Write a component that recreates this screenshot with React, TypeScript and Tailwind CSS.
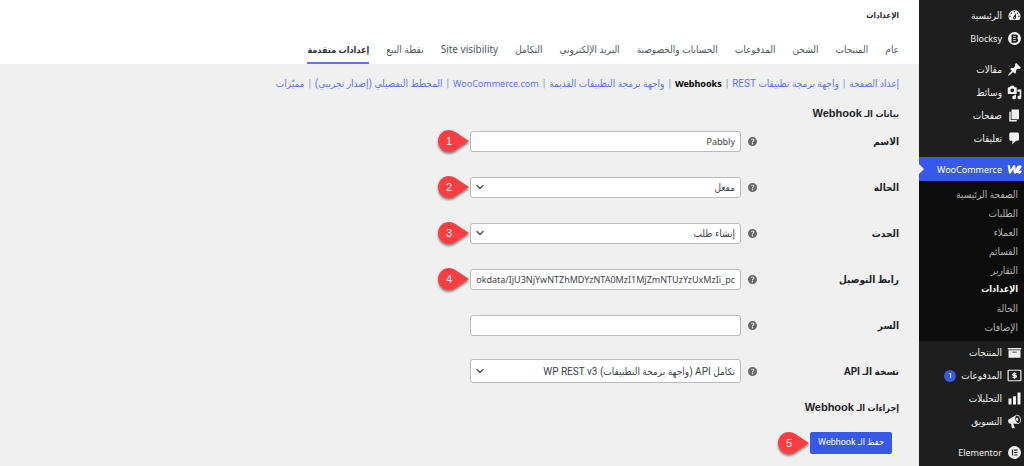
import { useState, type ReactNode } from 'react';
import { ChevronDown } from 'lucide-react';
import { clsx } from 'clsx';

function Dashicon({ d }: { d: string }) {
  return (
    <svg viewBox="0 0 20 20" className="size-[15px] shrink-0 fill-current" aria-hidden="true">
      <path d={d} />
    </svg>
  );
}

const icons: Record<string, ReactNode> = {
  dashboard: (
    <Dashicon d="M3.76 16h12.48A7.998 7.998 0 0 0 10 3a7.998 7.998 0 0 0-6.24 13zM10 4c.55 0 1 .45 1 1s-.45 1-1 1-1-.45-1-1 .45-1 1-1zM6 6c.55 0 1 .45 1 1s-.45 1-1 1-1-.45-1-1 .45-1 1-1zm8 0c.55 0 1 .45 1 1s-.45 1-1 1-1-.45-1-1 .45-1 1-1zm-5.37 5.55L12 7v6c0 1.1-.9 2-2 2s-2-.9-2-2c0-.57.24-1.08.63-1.45zM4 10c.55 0 1 .45 1 1s-.45 1-1 1-1-.45-1-1 .45-1 1-1zm12 0c.55 0 1 .45 1 1s-.45 1-1 1-1-.45-1-1 .45-1 1-1zm-5 3c0-.55-.45-1-1-1s-1 .45-1 1 .45 1 1 1 1-.45 1-1z" />
  ),
  blocksy: (
    <svg viewBox="0 0 20 20" className="size-[15px] shrink-0" aria-hidden="true">
      <circle cx="10" cy="10" r="8.6" fill="currentColor" />
      <path d="M6 4.5h5.5c2 0 3 1.2 3 2.8 0 1-.4 1.8-1 2.3.8.5 1.3 1.4 1.3 2.5 0 2-1.3 3.4-3.3 3.4H6z" fill="#1e1e1e" />
      <path d="M8.3 7.4h3.5M8.3 10h3.5M8.3 12.7h3.5" stroke="currentColor" strokeWidth="1.1" />
    </svg>
  ),
  post: (
    <Dashicon d="M10.44 3.02l1.82-1.82 6.36 6.35-1.83 1.82c-1.05-.68-2.48-.57-3.41.36l-.75.75c-.92.93-1.04 2.35-.35 3.41l-1.83 1.82-2.41-2.41-2.8 2.79c-.42.42-3.38 2.71-3.8 2.29s1.86-3.39 2.28-3.81l2.79-2.79L4.1 9.36l1.83-1.82c1.05.69 2.48.57 3.4-.36l.75-.75c.93-.92 1.05-2.35.36-3.41z" />
  ),
  media: (
    <Dashicon d="M13 11V4c0-.55-.45-1-1-1h-1.67L9 1H5L3.67 3H2c-.55 0-1 .45-1 1v7c0 .55.45 1 1 1h10c.55 0 1-.45 1-1zM7 4.5c1.38 0 2.5 1.12 2.5 2.5S8.38 9.5 7 9.5 4.5 8.38 4.5 7 5.62 4.5 7 4.5zM14 6h5v10.5c0 1.38-1.12 2.5-2.5 2.5S14 17.88 14 16.5s1.12-2.5 2.5-2.5c.17 0 .34.02.5.05V9h-3V6zm-4 8.05V13h2v3.5c0 1.38-1.12 2.5-2.5 2.5S7 17.88 7 16.5 8.12 14 9.5 14c.17 0 .34.02.5.05z" />
  ),
  page: <Dashicon d="M6 15V2h10v13H6zm-1 1h8v2H3V5h2v11z" />,
  comments: <Dashicon d="M5 2h9c1.1 0 2 .9 2 2v7c0 1.1-.9 2-2 2h-2l-5 5v-5H5c-1.1 0-2-.9-2-2V4c0-1.1.9-2 2-2z" />,
  woo: (
    <svg viewBox="0 0 20 20" className="size-[15px] shrink-0" fill="none" stroke="currentColor" strokeWidth="3" strokeLinejoin="round" strokeLinecap="round" aria-hidden="true">
      <path d="M2.5 5.5L4 14l5.5-8.5 1 8.5c3-1.5 6-4.5 7.5-8-4.5-.5-6 5.5-3 7.5 1.2.7 2.5.3 3-.5" />
    </svg>
  ),
  archive: <Dashicon d="M19 4v2H1V4h18zM2 7h16v10H2V7zm11 3V9H7v1h6z" />,
  payments: (
    <svg viewBox="0 0 20 20" className="size-[15px] shrink-0" fill="none" stroke="currentColor" aria-hidden="true">
      <rect x="1.5" y="3" width="17" height="14" rx="1" strokeWidth="1.6" />
      <path d="M12.5 7.5H9c-2 0-2 2.5 0 2.5h2c2 0 2 2.5 0 2.5H7.5M10 5.5v9" strokeWidth="1.7" />
    </svg>
  ),
  chart: <Dashicon d="M18 18V2h-4v16h4zm-6 0V7H8v11h4zm-6 0v-8H2v8h4z" />,
  megaphone: (
    <Dashicon d="M18.15 5.94c.46 1.62.38 3.22-.02 4.48-.42 1.28-1.26 2.18-2.3 2.48-.16.06-.26.06-.4.06-.06.02-.12.02-.18.02-.06.02-.14.02-.22.02h-6.8l2.22 5.5c.02.14-.06.26-.14.34-.08.1-.24.16-.34.16H6.95c-.1 0-.26-.06-.34-.16-.08-.08-.16-.2-.14-.34l-1-5.5H4.25l-.02-.02c-.5.06-1.08-.18-1.54-.62s-.88-1.08-1.06-1.88c-.24-.8-.2-1.56-.02-2.2.18-.62.58-1.08 1.06-1.3l.02-.02 9-5.4c.1-.06.18-.1.24-.16.06-.04.14-.08.24-.12.16-.08.28-.12.5-.18 1.04-.3 2.24.1 3.22.98s1.84 2.24 2.26 3.86zm-2.58 5.98h-.02c.4-.1.74-.34 1.04-.7.58-.7.86-1.76.86-3.04 0-.64-.1-1.3-.28-1.98-.34-1.36-1.02-2.5-1.78-3.24s-1.68-1.1-2.46-.88c-.82.22-1.4.96-1.7 2-.32 1.04-.28 2.36.06 3.72.38 1.36 1 2.5 1.8 3.24.78.74 1.62 1.1 2.48.88zm-2.54-7.08c.22-.04.42-.02.62.04.38.16.76.48 1.02 1s.42 1.2.42 1.78c0 .3-.04.56-.12.8-.18.48-.44.84-.86.94-.34.1-.8-.06-1.14-.4s-.64-.86-.78-1.5c-.18-.62-.12-1.24.02-1.72s.48-.84.82-.94z" />
  ),
  elementor: (
    <svg viewBox="0 0 20 20" className="size-[15px] shrink-0" aria-hidden="true">
      <circle cx="10" cy="10" r="8.6" fill="currentColor" />
      <path d="M7.3 6v8M9.5 6.8H14M9.5 10H14M9.5 13.2H14" stroke="#1e1e1e" strokeWidth="1.4" />
    </svg>
  ),
};

type MenuItem = { label: string; icon: string; count?: number; latin?: boolean };

const MENU_GROUPS: MenuItem[][] = [
  [
    { label: 'الرئيسية', icon: 'dashboard' },
    { label: 'Blocksy', icon: 'blocksy', latin: true },
  ],
  [
    { label: 'مقالات', icon: 'post' },
    { label: 'وسائط', icon: 'media' },
    { label: 'صفحات', icon: 'page' },
    { label: 'تعليقات', icon: 'comments' },
  ],
];

const STORE_ITEMS: MenuItem[] = [
  { label: 'المنتجات', icon: 'archive' },
  { label: 'المدفوعات', icon: 'payments', count: 1 },
  { label: 'التحليلات', icon: 'chart' },
  { label: 'التسويق', icon: 'megaphone' },
];

const SUBMENU = ['الصفحة الرئيسية', 'الطلبات', 'العملاء', 'القسائم', 'التقارير', 'الإعدادات', 'الحالة', 'الإضافات'];

const TABS = [
  'عام',
  'المنتجات',
  'الشحن',
  'المدفوعات',
  'الحسابات والخصوصية',
  'البريد الإلكتروني',
  'التكامل',
  'Site visibility',
  'نقطة البيع',
  'إعدادات متقدمة',
];

const SECTIONS = [
  { label: 'إعداد الصفحة' },
  { label: 'واجهة برمجة تطبيقات REST' },
  { label: 'Webhooks', latin: true, current: true },
  { label: 'واجهة برمجة التطبيقات القديمة' },
  { label: 'WooCommerce.com', latin: true },
  { label: 'المخطط التفصيلي (إصدار تجريبي)' },
  { label: 'مميّزات' },
];

// Latin labels run wide beside the Arabic ones, so they are set a step smaller
const latinText = "font-['Noto_Sans',sans-serif] text-[9px]";

function MenuLink({ item }: { item: MenuItem }) {
  return (
    <a href="#" className="flex h-[23px] items-center gap-[5px] ps-0.5 text-[#f0f0f1]">
      {icons[item.icon]}
      <span className={clsx(item.latin && latinText)}>{item.label}</span>
      {item.count && (
        <span className="flex size-3 items-center justify-center rounded-full bg-[#3858e9] text-[8px] text-white">
          {item.count}
        </span>
      )}
    </a>
  );
}

function Sidebar() {
  return (
    <aside className="w-[105px] shrink-0 bg-[#1e1e1e] pt-1 text-[10px] leading-none whitespace-nowrap">
      <nav>
        {MENU_GROUPS.map((group, i) => (
          <div key={i} className="mb-2">
            {group.map((item) => (
              <MenuLink key={item.label} item={item} />
            ))}
          </div>
        ))}
        <a href="#" className="relative -mt-px flex h-6 items-center gap-[5px] bg-[#3858e9] ps-0.5 text-white">
          {icons.woo}
          <span className={latinText}>WooCommerce</span>
          <svg viewBox="0 0 5 10" className="absolute end-0 top-[7px] h-2.5 w-[5px] fill-[#f0f0f0]" aria-hidden="true">
            <path d="M0 0l5 5-5 5z" />
          </svg>
        </a>
        <ul className="bg-[#0c0c0c] py-1 ps-1.5">
          {SUBMENU.map((label) => (
            <li key={label}>
              <a
                href="#"
                className={clsx(
                  'flex h-[19px] items-center',
                  label === 'الإعدادات' ? 'text-[9px] font-bold text-white' : 'text-[#b4b4b4]'
                )}
              >
                {label}
              </a>
            </li>
          ))}
        </ul>
        <div className="mb-2">
          {STORE_ITEMS.map((item) => (
            <MenuLink key={item.label} item={item} />
          ))}
        </div>
        <MenuLink item={{ label: 'Elementor', icon: 'elementor', latin: true }} />
      </nav>
    </aside>
  );
}

// Numbered marker that points at a control
function Pin({ n }: { n: number }) {
  return (
    <span className="absolute start-full top-1/2 flex h-6 w-8 -translate-y-1/2 items-center drop-shadow-[0_2px_1px_rgba(0,0,0,0.45)]">
      <svg viewBox="0 0 32 24" className="absolute inset-0 fill-[#fb3e42]" aria-hidden="true">
        <path d="M11 1C4.9 1 0 5.9 0 12s4.9 11 11 11c2.5 0 4.5-.8 6.5-2L31 12 17.5 3C15.5 1.7 13.5 1 11 1z" />
      </svg>
      <span className="relative ms-auto w-[22px] text-center font-['Liberation_Sans',sans-serif] text-[11px] leading-none text-white">
        {n}
      </span>
    </span>
  );
}

function Row({ id, label, pin, children }: { id: string; label: string; pin?: number; children: ReactNode }) {
  return (
    <div className="flex h-[46px] items-center">
      <label htmlFor={id} className="w-[142px] shrink-0 text-[10px] font-bold text-[#1d2327]">
        {label}
      </label>
      <svg viewBox="3 3 14 14" className="me-[7px] size-[9px] shrink-0 fill-[#666]" aria-hidden="true">
        <path d="M17 10c0-3.87-3.14-7-7-7-3.87 0-7 3.13-7 7s3.13 7 7 7c3.86 0 7-3.13 7-7zm-6.3 1.48H9.14v-.43c0-.38.08-.7.24-.98s.46-.57.88-.89c.41-.29.68-.53.81-.71.14-.18.2-.39.2-.62 0-.25-.09-.44-.28-.58-.19-.13-.45-.19-.79-.19-.58 0-1.25.19-2 .57l-.64-1.28c.87-.49 1.8-.74 2.77-.74.81 0 1.45.2 1.92.58.48.39.71.91.71 1.55 0 .43-.09.8-.29 1.11-.19.32-.57.67-1.11 1.06-.38.28-.61.49-.71.63-.1.15-.15.34-.15.57v.35zm-1.47 2.74c-.18-.17-.27-.42-.27-.73 0-.33.08-.58.26-.75s.43-.25.77-.25c.32 0 .57.09.75.26s.27.42.27.74c0 .3-.09.55-.27.72-.18.18-.43.27-.75.27-.33 0-.58-.09-.76-.26z" />
      </svg>
      <div className="relative w-[271px]">
        {children}
        {pin && <Pin n={pin} />}
      </div>
    </div>
  );
}

const control =
  'block w-full rounded-[3px] border border-[#b9bbbe] bg-white px-[5px] text-[#3c434a] focus:outline-none focus:border-[#3858e9]';

function TextField({ id, label, pin, initial }: { id: string; label: string; pin?: number; initial: string }) {
  const [value, setValue] = useState(initial);
  return (
    <Row id={id} label={label} pin={pin}>
      <input
        id={id}
        type="text"
        value={value}
        onChange={(e) => setValue(e.target.value)}
        className={clsx(control, latinText, 'h-[21px]')}
      />
    </Row>
  );
}

function SelectField({ id, label, pin, option, tall }: { id: string; label: string; pin?: number; option: string; tall?: boolean }) {
  return (
    <Row id={id} label={label} pin={pin}>
      <select id={id} className={clsx(control, 'appearance-none text-[10px]', tall ? 'h-6' : 'h-[21px]')}>
        <option>{option}</option>
      </select>
      <ChevronDown size={12} strokeWidth={3} className="pointer-events-none absolute end-1 top-1/2 -translate-y-1/2 text-[#50575e]" />
    </Row>
  );
}

function SectionTitle({ children }: { children: ReactNode }) {
  return (
    <h2 className="pt-[13px] font-['Liberation_Sans','DejaVu_Sans_Condensed',sans-serif] text-[9px] leading-4 font-bold text-[#1d2327]">
      {children} <span className="text-[11px]">Webhook</span>
    </h2>
  );
}

export default function App() {
  return (
    <div dir="rtl" className="flex min-h-screen bg-[#f0f0f0] font-['Roboto','DejaVu_Sans_Condensed','DejaVu_Sans',sans-serif]">
      <Sidebar />

      <main className="min-w-0 flex-1">
        <header className="bg-white px-5 pt-2">
          <h1 className="text-[8px] leading-4 font-bold text-[#1d2327]">الإعدادات</h1>
          <nav className="mt-3 flex gap-[17px] font-['Noto_Sans','DejaVu_Sans_Condensed',sans-serif] text-[10px] leading-none whitespace-nowrap text-[#50575e]">
            {TABS.map((tab, i) => (
              <a
                key={tab}
                href="#"
                className={clsx(
                  'flex h-7 items-center border-b-2',
                  i === TABS.length - 1 ? 'border-[#5f74f0] text-[9px] font-bold text-[#2c3338]' : 'border-transparent'
                )}
              >
                {tab}
              </a>
            ))}
          </nav>
        </header>

        <div className="px-5">
          <ul className="flex pt-3 text-[10px] leading-4 whitespace-nowrap text-[#5f74f0]">
            {SECTIONS.map((section, i) => (
              <li key={section.label}>
                <a href="#" className={clsx(section.latin && latinText, section.current && 'font-bold text-black')}>
                  {section.label}
                </a>
                {i < SECTIONS.length - 1 && <span className="mx-1 text-[#6f9bc0]">|</span>}
              </li>
            ))}
          </ul>

          <form onSubmit={(e) => e.preventDefault()}>
            <SectionTitle>بيانات الـ</SectionTitle>
            <div className="-mt-1 -mb-2">
              <TextField id="name" label="الاسم" pin={1} initial="Pabbly" />
              <SelectField id="status" label="الحالة" pin={2} option="مفعل" />
              <SelectField id="topic" label="الحدث" pin={3} option="إنشاء طلب" />
              <TextField
                id="delivery-url"
                label="رابط التوصيل"
                pin={4}
                initial="ookdata/IjU3NjYwNTZhMDYzNTA0MzI1MjZmNTUzYzUxMzIi_pc"
              />
              <TextField id="secret" label="السر" initial="" />
              <SelectField id="api-version" label="نسخة الـ API" option="تكامل API (واجهة برمجة التطبيقات) WP REST v3" tall />
            </div>

            <SectionTitle>إجراءات الـ</SectionTitle>
            <div className="relative mt-4 mb-3 ms-[7px] w-[82px]">
              <button type="submit" className="block h-[22px] w-full rounded-xs bg-[#3858e9] text-[9px] whitespace-nowrap text-white">
                حفظ الـ Webhook
              </button>
              <Pin n={5} />
            </div>
          </form>
        </div>
      </main>
    </div>
  );
}
